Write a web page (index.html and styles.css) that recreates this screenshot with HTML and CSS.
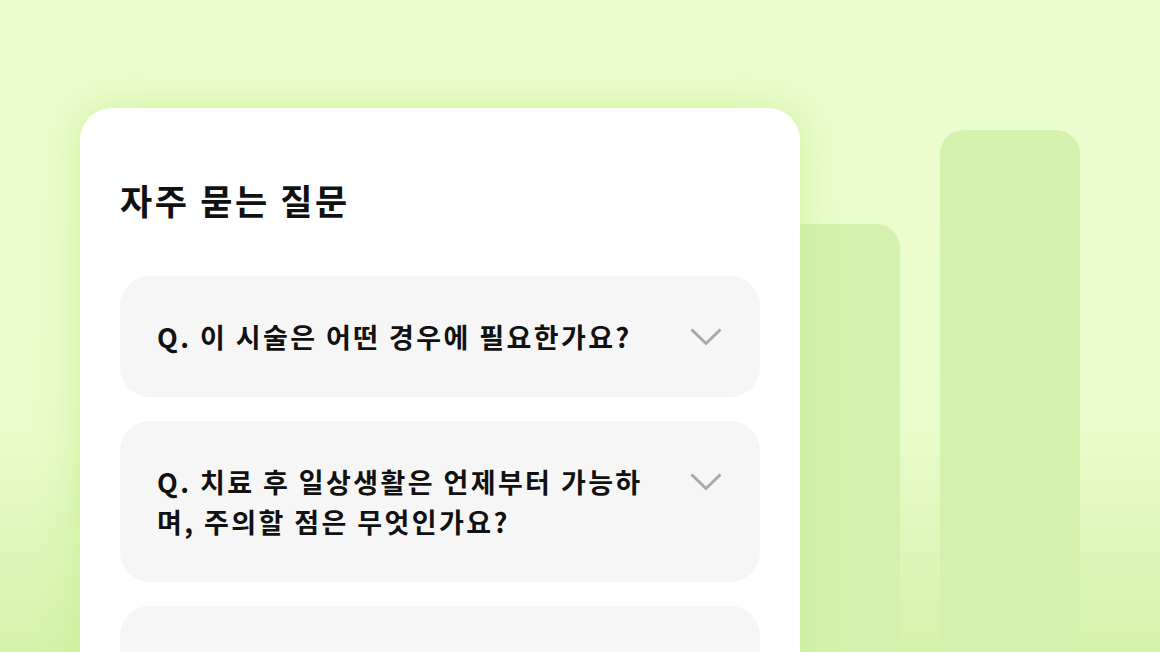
FILE: index.html
```html
<html>
<head>
<meta charset="utf-8">
<link rel="stylesheet" href="styles.css">
</head>
<body>
<div id="scene">
<section id="faq">
<h2 class="faq-title">자주 묻는 질문</h2>
<div class="faq-item">
<p class="faq-q">Q. 이 시술은 어떤 경우에 필요한가요?</p>
<svg class="chevron" width="32" height="18" viewBox="0 0 32 18"><path d="M1.5 1.5 L16 15.5 L30.5 1.5" fill="none" stroke="#a9a9a9" stroke-width="3"/></svg>
</div>
<div class="faq-item">
<p class="faq-q">Q. 치료 후 일상생활은 언제부터 가능하며, 주의할 점은 무엇인가요?</p>
<svg class="chevron" width="32" height="18" viewBox="0 0 32 18"><path d="M1.5 1.5 L16 15.5 L30.5 1.5" fill="none" stroke="#a9a9a9" stroke-width="3"/></svg>
</div>
<div class="faq-item faq-item-empty"></div>
</section>
<div class="bar bar-short"></div>
<div class="bar bar-tall"></div>
</div>
</body>
</html>
```

FILE: styles.css
```css
html, body {
margin: 0;
height: 652px;
overflow: hidden;
}

body {
background: linear-gradient(to bottom, #ebfdcf 0%, #e9fccb 66%, #d5f2ab 100%);
font-family: "Noto Sans CJK KR", "Noto Sans", sans-serif;
color: #111;
}

#scene {
display: flex;
align-items: flex-start;
padding-left: 80px;
height: 652px;
}

#faq {
position: relative;
z-index: 1;
width: 720px;
flex-shrink: 0;
margin-top: 108px;
padding: 68px 40px 40px;
box-sizing: border-box;
background-color: #fff;
border-radius: 32px;
box-shadow: 0 0 40px rgba(196, 238, 140, 0.75);
display: flex;
flex-direction: column;
gap: 24px;
}

.faq-title {
margin: 0 0 28px;
font-size: 35px;
font-weight: 700;
line-height: 48px;
letter-spacing: 2.6px;
}

.faq-item {
display: flex;
align-items: flex-start;
justify-content: space-between;
gap: 40px;
padding: 41px 38px 40px 37px;
background-color: #f6f6f6;
border-radius: 30px;
}

.faq-item-empty {
height: 40px;
}

.faq-q {
margin: 0;
font-size: 27px;
font-weight: 700;
line-height: 40px;
letter-spacing: 2.4px;
}

.chevron {
flex-shrink: 0;
margin-top: 11px;
}

.bar {
flex-shrink: 0;
background-color: #d4f2ae;
border-radius: 0 24px 0 0;
height: 700px;
}

.bar-short {
width: 100px;
margin-top: 224px;
}

.bar-tall {
width: 140px;
margin-top: 130px;
margin-left: 40px;
border-radius: 24px 24px 0 0;
}
```
